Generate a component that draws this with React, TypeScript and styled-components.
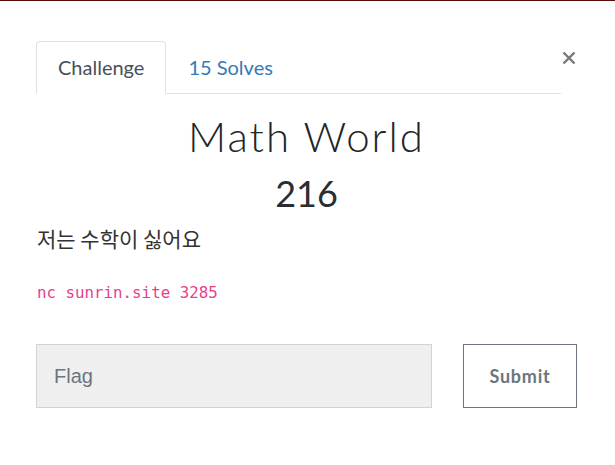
import { FC } from 'react';
import styled, { createGlobalStyle } from 'styled-components';

const GlobalStyle = createGlobalStyle`
	html, body {
		margin: 0;
		padding: 0;
		background: #ffffff;
	}
	body {
		font-family: Lato, 'Noto Sans', sans-serif;
		color: #333;
	}
`;

const Page = styled('div')`
	width: 615px;
	height: 465px;
	box-sizing: border-box;
	border-top: 1px solid #5a0c0c;
	background: #fff;
`;

const Modal = styled('div')`
	padding: 40px 38px 0 36px;
`;

const Header = styled('div')`
	display: flex;
	align-items: flex-start;
`;

const Tabs = styled('ul')`
	flex: 1;
	display: flex;
	margin: 0;
	padding: 0;
	list-style: none;
	border-bottom: 1px solid #dee2e6;
`;

const Tab = styled('li')<{ $active?: boolean }>`
	margin-bottom: -1px;
	padding: 13px 21px 13px 21px;
	font-size: 20px;
	line-height: 25px;
	border: 1px solid ${(props) => (props.$active ? '#dee2e6' : 'transparent')};
	border-bottom-color: ${(props) => (props.$active ? '#fff' : 'transparent')};
	border-radius: 4px 4px 0 0;
	background: ${(props) => (props.$active ? '#fff' : 'transparent')};
	color: ${(props) => (props.$active ? '#495057' : '#337ab7')};
`;

const Close = styled('button')`
	width: 16px;
	margin-top: 10px;
	padding: 0;
	border: 0;
	background: none;
	color: #777;
	display: flex;
	justify-content: center;
`;

const Title = styled('h3')`
	margin: 17px 0 0 0;
	text-align: center;
	font-family: Lato, sans-serif;
	font-weight: 300;
	font-size: 42px;
	line-height: 50px;
	letter-spacing: 2px;
	color: #212529;
`;

const Value = styled('h4')`
	margin: 10px 0 0 0;
	text-align: center;
	font-family: Lato, sans-serif;
	font-weight: 400;
	font-size: 36px;
	line-height: 44px;
	color: #2a2e33;
`;

const Description = styled('p')`
	margin: 9px 0 0 1px;
	font-family: 'Noto Sans CJK KR', sans-serif;
	font-size: 21px;
	line-height: 28px;
	color: #333;
`;

const Code = styled('code')`
	display: block;
	margin: 31px 0 0 1px;
	font-family: 'DejaVu Sans Mono', monospace;
	font-size: 15.8px;
	line-height: 20px;
	color: #e83e8c;
`;

const FormRow = styled('form')`
	display: flex;
	gap: 31px;
	margin-top: 41px;
`;

const FlagInput = styled('input')`
	flex: 1;
	height: 64px;
	box-sizing: border-box;
	padding: 0 17px;
	border: 1px solid #ced4da;
	background: #efefef;
	font-family: 'Liberation Sans', Arial, sans-serif;
	font-size: 20px;
	color: #495057;
	outline: none;
	&::placeholder {
		color: #6c757d;
	}
`;

const SubmitButton = styled('button')`
	width: 114px;
	height: 64px;
	box-sizing: border-box;
	border: 1px solid #6c757d;
	background: #fff;
	font-family: Lato, sans-serif;
	font-weight: 700;
	font-size: 18px;
	letter-spacing: 0.8px;
	color: #6c757d;
`;

const App: FC = () => {
	return (
		<Page>
			<GlobalStyle />
			<Modal>
				<Header>
					<Tabs>
						<Tab $active>Challenge</Tab>
						<Tab>15 Solves</Tab>
					</Tabs>
					<Close aria-label="Close">
						<svg width="14" height="14" viewBox="0 0 14 14">
							<path d="M1.5 1.5 L12.5 12.5 M12.5 1.5 L1.5 12.5" stroke="#777" strokeWidth="2.4" />
						</svg>
					</Close>
				</Header>
				<Title>Math World</Title>
				<Value>216</Value>
				<Description>저는 수학이 싫어요</Description>
				<Code>nc sunrin.site 3285</Code>
				<FormRow onSubmit={(e) => e.preventDefault()}>
					<FlagInput placeholder="Flag" />
					<SubmitButton type="submit">Submit</SubmitButton>
				</FormRow>
			</Modal>
		</Page>
	);
};

export default App;
